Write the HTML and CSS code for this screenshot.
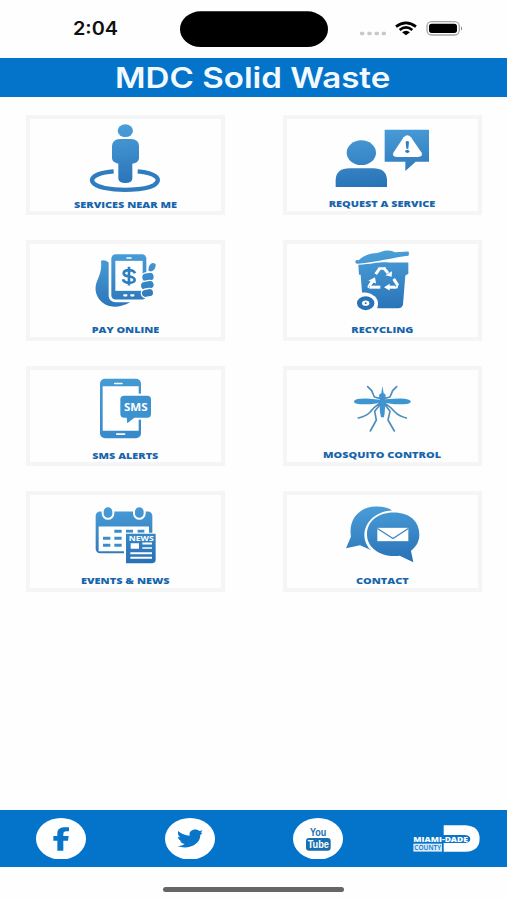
FILE: index.html
```
<!DOCTYPE html>
<html lang="en">
<head>
<meta charset="utf-8">
<title>MDC Solid Waste</title>
<link rel="stylesheet" href="styles.css">
</head>
<body>
<div class="status">
  <svg viewBox="0 0 1521 172" aria-hidden="true">
    <text class="clock" x="219" y="106" textLength="135" lengthAdjust="spacingAndGlyphs">2:04</text>
    <rect x="540" y="34" width="444" height="107" rx="62" ry="53.500"/>
    <g fill="#c9c9c9"><rect x="1080" y="95" width="13" height="11" rx="4"/><rect x="1102" y="95" width="13" height="11" rx="4"/><rect x="1124" y="95" width="13" height="11" rx="4"/><rect x="1145" y="95" width="13" height="11" rx="4"/></g>
    <g fill="none" stroke="#000" stroke-width="8"><path d="M1188 80Q1218 57 1248 80"/><path d="M1199 90Q1218 75 1237 90"/></g>
    <path d="M1206 97Q1218 88 1230 97L1218 106Z"/>
    <rect x="1281" y="65" width="97" height="40" rx="14" fill="#fff" stroke="#a5a5a5" stroke-width="4"/>
    <rect x="1287" y="71" width="84" height="28" rx="8"/>
    <path d="M1383 79Q1390 85 1383 92Z" fill="#888"/>
  </svg>
</div>
<header class="header">
  <svg viewBox="0 0 1521 118"><text class="title" x="345" y="90" textLength="826" lengthAdjust="spacingAndGlyphs">MDC Solid Waste</text></svg>
</header>
<svg class="defs" aria-hidden="true"><defs>
  <linearGradient id="blue" gradientUnits="userSpaceOnUse" x1="300" y1="50" x2="320" y2="245"><stop offset="0" stop-color="#4ba0d9"/><stop offset="1" stop-color="#276fb5"/></linearGradient>
  <linearGradient id="light" gradientUnits="userSpaceOnUse" x1="300" y1="50" x2="320" y2="245"><stop offset="0" stop-color="#459bd5"/><stop offset="1" stop-color="#3789c7"/></linearGradient>
</defs></svg>
<main class="grid">
  <a class="card"><svg viewBox="18 21 597 301.500">
    <g fill="url(#blue)"><ellipse cx="316" cy="68" rx="23" ry="19"/>
    <path d="M300 93H333Q357 94 357 114V151Q356 165 337 167V212Q335 225 316 225Q297 225 295 212V167Q277 164 276 151V114Q277 94 300 93Z"/></g>
    <path d="M281 190C203 196 197 228 254 240C300 249 373 247 401 232C430 214 406 194 353 190" fill="none" stroke="#2f7dbe" stroke-width="13"/>
    <text class="label" x="162" y="300" textLength="309" lengthAdjust="spacingAndGlyphs">SERVICES NEAR ME</text>
  </svg></a>
  <a class="card"><svg viewBox="15 21 597 301.500">
    <g fill="url(#blue)"><ellipse cx="250" cy="134" rx="44" ry="37"/><path d="M173 237V215Q175 181 215 181H285Q325 181 327 215V237Z"/><path d="M320 65H453V161H413L382 189V161H320Z"/></g>
    <path d="M377 88Q388 76 399 88L430 133Q437 146 420 147H356Q340 146 347 133Z" fill="#fff"/>
    <path d="M383 101Q388 97 393 101L391 122H385Z" fill="#2f7fc0"/><ellipse cx="388" cy="130" rx="6" ry="5" fill="#2f7fc0"/>
    <text class="label" x="152" y="297" textLength="320" lengthAdjust="spacingAndGlyphs">REQUEST A SERVICE</text>
  </svg></a>
  <a class="card"><svg viewBox="18 19.500 597 301.500">
    <path d="M243 82Q254 77 266 87V188Q268 204 287 206H331Q300 222 277 219C244 215 223 187 227 158C232 133 247 120 243 82Z" fill="url(#blue)"/>
    <rect x="274" y="62" width="105" height="136" rx="13" fill="url(#blue)"/>
    <path d="M286 82H368V172H286Z" fill="#fff"/><rect x="319" y="71" width="16" height="5" rx="2" fill="#fff"/><rect x="310" y="182" width="12" height="7" rx="2" fill="#fff"/><rect x="331" y="182" width="12" height="7" rx="2" fill="#fff"/>
    <path d="M345 119Q341 110 327 110Q311 110 311 120Q312 127 327 129Q344 131 344 140Q343 148 327 148Q311 147 309 137M327 100V156" fill="none" stroke="#2f7fc0" stroke-width="8"/>
    <path d="M387 98Q395 83 407 92Q408 110 391 115L385 110Z" fill="url(#blue)"/>
    <g fill="url(#blue)" stroke="#fff" stroke-width="4"><rect x="365" y="117" width="38" height="27" rx="13" transform="rotate(-10 384 131)"/><rect x="361" y="142" width="42" height="26" rx="13" transform="rotate(-10 382 155)"/><rect x="364" y="166" width="37" height="25" rx="12" transform="rotate(-10 382 179)"/></g>
    <text class="label" x="215" y="298" textLength="203" lengthAdjust="spacingAndGlyphs">PAY ONLINE</text>
  </svg></a>
  <a class="card"><svg viewBox="15 19.500 597 301.500">
    <g fill="url(#blue)"><path d="M232 83Q234 78 242 80Q260 61 301 58L319 52Q339 49 351 56L391 54Q395 60 391 67C344 73 297 86 240 91Q232 91 232 83Z"/>
    <path d="M241 94C285 91 308 84 332 87H391V121L382 126L375 213Q373 224 360 224H298C303 197 285 178 262 177H252L248 124H243Z"/></g>
    <ellipse cx="263" cy="209" rx="37" ry="29" fill="#fff"/><ellipse cx="263" cy="209" rx="26" ry="21" fill="#2872b7"/><ellipse cx="263" cy="209" rx="11" ry="8" fill="#fff"/><ellipse cx="263" cy="209" rx="3" ry="2.500" fill="#2872b7"/>
    <g fill="none" stroke="#fff" stroke-width="9"><path d="M293 122L305 105"/><path d="M317 103L330 119"/><path d="M347 136L359 155"/><path d="M352 161H332"/><path d="M307 161H275"/><path d="M274 157L284 143"/></g>
    <g fill="#fff"><path d="M301 101H324L317 109H303ZM322 125L342 113L341 130ZM363 150L358 165H347ZM335 151V171L318 161ZM271 152L268 161L276 166ZM271 142L291 131L294 150Z"/></g>
    <text class="label" x="220" y="298" textLength="186" lengthAdjust="spacingAndGlyphs">RECYCLING</text>
  </svg></a>
  <a class="card"><svg viewBox="18 19 597 301.500">
    <rect x="240" y="57" width="123" height="179" rx="15" fill="url(#light)"/><path d="M248 80H356V213H248Z" fill="#fff"/>
    <g fill="#fff"><rect x="282" y="69" width="26" height="5" rx="2"/><rect x="288" y="221" width="28" height="5" rx="2"/></g>
    <path d="M352 102H370V180H352Z" fill="#fff"/>
    <path d="M313 108H382Q393 108 393 119V163Q393 174 382 174H343L322 191L320 174H313Q301 174 301 163V119Q301 108 313 108Z" fill="#3c91cf"/>
    <text class="sms" x="312" y="153" textLength="71" lengthAdjust="spacingAndGlyphs">SMS</text>
    <text class="label" x="217" y="297" textLength="198" lengthAdjust="spacingAndGlyphs">SMS ALERTS</text>
  </svg></a>
  <a class="card"><svg viewBox="15 19 597 301.500">
    <path fill="#3d96d1" d="M313 79L317 101Q326 105 322 112L320 119L350 117Q391 114 398 124Q401 133 377 134H350L322 130L320 160L318 173H309L306 157L304 130L278 134H246Q226 132 228 124Q233 115 276 117L306 120L303 109Q302 103 310 101Z"/>
    <g fill="none" stroke="#4d8dbc" stroke-linecap="round" stroke-linejoin="round" stroke-width="5"><path d="M306 116L289 112L281 93L269 81M320 116L336 112L344 93L356 81"/><path d="M305 131Q284 145 277 157Q264 170 241 175M321 131Q341 144 351 157Q362 169 385 175M307 134L290 155L295 181L277 214M320 134L336 155L330 181L349 214"/></g>
    <text class="label" x="135" y="294" textLength="354" lengthAdjust="spacingAndGlyphs">MOSQUITO CONTROL</text>
  </svg></a>
  <a class="card"><svg viewBox="18 17.500 597 301.500">
    <rect x="227" y="79" width="170" height="125" rx="13" fill="url(#blue)"/><path d="M236 124H387V198H236Z" fill="#fff"/>
    <g fill="url(#blue)" stroke="#fff" stroke-width="6"><rect x="248" y="63" width="32" height="38" rx="16"/><rect x="342" y="63" width="32" height="38" rx="16"/></g>
    <path d="M283 134H305V143H283ZM318 134H339V143H318ZM353 134H373V143H353ZM249 155H271V164H249ZM283 155H305V164H283ZM249 176H271V185H249ZM283 176H305V185H283Z" fill="#3b8dca"/>
    <path d="M312 143H414V239H312Z" fill="#fff"/><path d="M318 146H407V224Q407 234 397 234H318Z" fill="url(#blue)"/>
    <text class="news" x="326" y="167" textLength="75" lengthAdjust="spacingAndGlyphs">NEWS</text>
    <path d="M332 174H357V191H332ZM367 172H396V178H367ZM367 186H396V191H367ZM331 201H396V207H331ZM331 215H396V221H331Z" fill="#fff"/>
    <text class="label" x="183" y="298" textLength="266" lengthAdjust="spacingAndGlyphs">EVENTS &amp; NEWS</text>
  </svg></a>
  <a class="card"><svg viewBox="15 17.500 597 301.500">
    <path d="M204 189L219 154C211 109 237 66 293 64Q326 63 342 76C277 79 244 135 266 178Q270 189 280 195L246 180Z" fill="url(#blue)"/>
    <path d="M346 82C398 82 424 111 424 148C424 170 414 185 399 197L406 231L365 212C308 218 267 188 267 148C267 108 300 82 346 82Z" fill="url(#blue)"/>
    <path d="M298 128H391V168H298Z" fill="#fff"/><path d="M298 130L345 160L391 130" fill="none" stroke="#3988c6" stroke-width="4"/>
    <text class="label" x="234" y="298" textLength="158" lengthAdjust="spacingAndGlyphs">CONTACT</text>
  </svg></a>
</main>
<footer class="social">
  <svg class="round" viewBox="109 53 150 125"><ellipse cx="184" cy="115.500" rx="75" ry="62.500" fill="#fff"/><path d="M173 151V121H161V107H173V98C173 84 184 79 208 81V93H200Q191 94 191 101V107H207L205 121H191V151Z" fill="#0875c9"/></svg>
  <svg class="round" viewBox="494 53 150 125"><ellipse cx="569" cy="115.500" rx="75" ry="62.500" fill="#fff"/><path d="M534 92Q547 105 568 106C564 88 587 82 598 92L607 90L601 97L607 97L600 104C600 134 562 149 531 137Q545 138 553 131Q542 130 539 123H546Q533 119 533 109L540 111Q530 103 534 92Z" fill="#0875c9"/></svg>
  <svg class="round" viewBox="108 53 150 125"><ellipse cx="183" cy="115.500" rx="75" ry="62.500" fill="#fff"/><text class="you" x="159" y="107" textLength="49" lengthAdjust="spacingAndGlyphs">You</text><rect x="147" y="113" width="74" height="38" rx="9" fill="#176fae"/><text class="tube" x="152" y="144" textLength="64" lengthAdjust="spacingAndGlyphs">Tube</text></svg>
  <svg class="county" viewBox="466 74 201 82"><path d="M558 75H624Q666 78 666 115Q666 152 624 154H558Z" fill="#fff"/><path d="M554 104H622Q638 106 638 116Q638 126 622 128H554Z" fill="#0875c9"/><path d="M467 130H553V154H467Z" fill="#d5eafa"/><text class="miami" x="467" y="124" textLength="164" lengthAdjust="spacingAndGlyphs">MIAMI-DADE</text><text class="countytext" x="470" y="149" textLength="80" lengthAdjust="spacingAndGlyphs">COUNTY</text></svg>
</footer>
<div class="home"><span class="indicator"></span></div>
</body>
</html>
```
FILE: styles.css
```
* { box-sizing: border-box; }
body { margin: 0; width: 507px; height: 900px; overflow: hidden; background: #fefefe; display: flex; flex-direction: column; font-family: Inter, "Liberation Sans", sans-serif; }
svg { display: block; }
.defs { position: absolute; width: 0; height: 0; }
.status { height: 57.5px; flex: none; }
.status svg, .header svg { width: 507px; }
.clock { font: 600 54px Inter, sans-serif; fill: #111; }
.header { height: 39.3px; flex: none; background: #0473ca; }
.title { font: 600 86px Inter, sans-serif; fill: #f3faff; }
.grid { flex: 1; padding: 18px 25px 0 26px; display: grid; grid-template-columns: 199px 199px; grid-auto-rows: 100.5px; gap: 25px 58px; align-content: start; }
.card { border: 4px solid #f5f5f5; background: #fefefe; }
.card svg { width: 199px; height: 100.5px; margin: -4px; }
.label { font: 800 27px "Open Sans", sans-serif; fill: #1765ab; }
.sms { font: 700 33px "Open Sans", sans-serif; fill: #fff; }
.news { font: 700 22px "Open Sans", sans-serif; fill: #fff; }
.social { height: 57.8px; flex: none; background: #0473ca; padding-left: 36.4px; display: flex; align-items: center; gap: 78.4px; }
.round { width: 50px; height: 41.7px; flex: none; }
.county { width: 67px; height: 27.3px; margin-left: -9px; flex: none; }
.you { font: 700 34px "Liberation Sans", sans-serif; fill: #176fae; }
.tube { font: 700 33px "Liberation Sans", sans-serif; fill: #fff; }
.miami { font: 800 22px "Open Sans", sans-serif; fill: #fff; }
.countytext { font: 600 22px "Open Sans", sans-serif; fill: #0875c9; }
.home { height: 32.7px; flex: none; display: flex; justify-content: center; padding-top: 20px; }
.indicator { width: 181px; height: 5px; border-radius: 3px; background: #666; }
```
